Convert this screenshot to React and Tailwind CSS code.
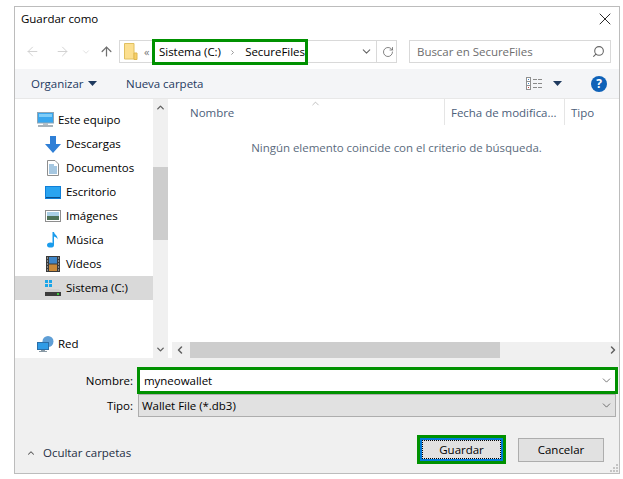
import { ArrowLeft, ArrowRight, ArrowUp, ChevronDown, ChevronUp, ChevronLeft, ChevronRight, RotateCw, Search, X } from "lucide-react";

const Drive = () => (
  <svg width="16" height="16" viewBox="0 0 16 16">
    <rect x="0" y="0" width="3" height="3" fill="#1aa5e8" />
    <rect x="4" y="0" width="3" height="3" fill="#1aa5e8" />
    <rect x="0" y="4" width="3" height="3" fill="#1aa5e8" />
    <rect x="4" y="4" width="3" height="3" fill="#1aa5e8" />
    <path d="M2 9h12l2 3H0z" fill="#d0d0d0" />
    <rect x="0" y="12" width="16" height="4" fill="#3d3d3d" />
    <rect x="12" y="13" width="2" height="2" fill="#3ec83e" />
  </svg>
);

const Monitor = () => (
  <svg width="17" height="16" viewBox="0 0 17 16">
    <rect x="0.500" y="0.500" width="16" height="10.500" fill="#38a6ee" stroke="#8fa6b5" />
    <rect x="2" y="2" width="13" height="3" fill="#7fcdf8" />
    <rect x="6" y="11" width="5" height="2" fill="#b5c0c8" />
    <rect x="1" y="13" width="15" height="2" fill="#a8b3bb" />
  </svg>
);

const Downloads = () => (
  <svg width="16" height="17" viewBox="0 0 16 17">
    <path d="M5 0h6v8h5l-8 9-8-9h5z" fill="#2f7fd6" />
  </svg>
);

const Documents = () => (
  <svg width="12" height="16" viewBox="0 0 12 16">
    <path d="M.5 .5h7.500l3.500 3.500v11.500h-11z" fill="#fff" stroke="#8e8e8e" />
    <path d="M2 5h5M2 7h8M2 9h8M2 11h8M2 13h8" stroke="#4d8fc2" />
  </svg>
);

const Desktop = () => (
  <svg width="16" height="13" viewBox="0 0 16 13">
    <rect x="0" y="0" width="16" height="13" fill="#0f7fd8" />
    <rect x="1" y="1" width="14" height="10" fill="#2aa4f0" />
    <rect x="1" y="11" width="14" height="1" fill="#0b4f8c" />
  </svg>
);

const Pictures = () => (
  <svg width="16" height="12" viewBox="0 0 16 12">
    <rect x="0.500" y="0.500" width="15" height="11" fill="#fff" stroke="#8e8e8e" />
    <rect x="2" y="2" width="12" height="4" fill="#a9cfe6" />
    <rect x="2" y="6" width="12" height="4" fill="#4d7257" />
  </svg>
);

const Music = () => (
  <svg width="11" height="16" viewBox="0 0 11 16">
    <ellipse cx="3.500" cy="13" rx="3.500" ry="2.600" fill="#1b9cec" />
    <path d="M5.500 13V0h1.500c.4 2.500 4 3.500 3.500 7.500C10 5.500 8.500 5 7 4.500V13z" fill="#1b9cec" />
  </svg>
);

const Videos = () => (
  <svg width="14" height="16" viewBox="0 0 14 16">
    <rect x="0" y="0" width="14" height="16" fill="#3a3a3a" />
    <rect x="3" y="1" width="8" height="6.500" fill="#3f87c9" />
    <rect x="3" y="8.500" width="8" height="6.500" fill="#c98a3a" />
    <path d="M1 2h1M1 5h1M1 8h1M1 11h1M1 14h1M12 2h1M12 5h1M12 8h1M12 11h1M12 14h1" stroke="#ddd" />
  </svg>
);

const Network = () => (
  <svg width="17" height="16" viewBox="0 0 17 16">
    <circle cx="11" cy="5.500" r="5.500" fill="#5f9fd6" />
    <rect x="0.500" y="6.500" width="11" height="7" fill="#2f9be6" stroke="#2a6ea8" />
    <rect x="4" y="14" width="4" height="1" fill="#8a9aa5" />
    <rect x="2" y="15" width="8" height="1" fill="#8a9aa5" />
  </svg>
);

const Folder = () => (
  <svg width="14" height="17" viewBox="0 0 14 17">
    <path d="M.5 .5h9.500v15.500H.5z" fill="#fcdf8f" stroke="#e0c060" />
    <path d="M10 10h3v6.500h-3z" fill="#f6cf6a" stroke="#e0b84f" />
  </svg>
);

const ViewsIcon = () => (
  <svg width="17" height="13" viewBox="0 0 17 13">
    <rect x="0.500" y="0.500" width="4" height="12" fill="#fff" stroke="#8f8f8f" />
    <path d="M1 4.500h3M1 8.500h3" stroke="#8f8f8f" />
    <rect x="2" y="2" width="1" height="1" fill="#3f87c9" />
    <rect x="2" y="6" width="1" height="1" fill="#3f87c9" />
    <rect x="2" y="10" width="1" height="1" fill="#c94040" />
    <path d="M7 2.500h4M12 2.500h4M7 6.500h4M12 6.500h4M7 10.500h4M12 10.500h4" stroke="#8a8a8a" />
  </svg>
);

const Grip = () => (
  <svg width="8" height="8" viewBox="0 0 8 8" className="absolute right-[1px] bottom-[1px]">
    <path d="M6 0h2v2H6zM3 3h2v2H3zM6 3h2v2H6zM0 6h2v2H0zM3 6h2v2H3zM6 6h2v2H6z" fill="#c4c4c4" />
  </svg>
);

const Caret = ({ className }) => (
  <svg width="9" height="5" viewBox="0 0 9 5" className={className}>
    <path d="M0 0h9L4.500 5z" fill="currentColor" />
  </svg>
);

const treeItems = [
  { label: "Descargas", icon: <Downloads />, pad: "" },
  { label: "Documentos", icon: <Documents />, pad: "pl-[2px]" },
  { label: "Escritorio", icon: <Desktop />, pad: "" },
  { label: "Imágenes", icon: <Pictures />, pad: "" },
  { label: "Música", icon: <Music />, pad: "pl-[2px]" },
  { label: "Vídeos", icon: <Videos />, pad: "pl-[1px]" },
];

const TreeRow = ({ label, icon, selected, top, pad }) => (
  <div
    className={`h-6 flex items-center ${top ? "pl-[22px]" : "pl-[30px]"} ${
      selected ? "bg-[#d9d9d9]" : ""
    }`}
  >
    <span className={`w-[21px] flex shrink-0 ${pad || ""}`}>{icon}</span>
    <span className="text-black">{label}</span>
  </div>
);

export default function App() {
  return (
    <div className="w-[623px] h-[479px] bg-white pl-[14px] pt-[6px] text-[11.5px] leading-none font-['Open_Sans','Noto_Sans',sans-serif] tracking-[-0.03px] whitespace-nowrap">
      <div className="w-[606px] h-[468px] border border-[#bcbcbc] flex flex-col bg-white">
        {/* TITLE */}
        <div className="h-[27px] shrink-0 flex items-center justify-between pl-[6px] pr-[4px] pb-[4px]">
          <span className="text-black">Guardar como</span>
          <X size={20} strokeWidth={1} className="text-black" />
        </div>

        {/* NAV */}
        <div className="h-[35px] shrink-0 flex items-center pl-[10px] text-[#444]">
          <ArrowLeft size={15} strokeWidth={1.5} className="text-[#cfcfcf]" />
          <ArrowRight size={15} strokeWidth={1.5} className="text-[#cfcfcf] ml-[15px]" />
          <ChevronDown size={10} strokeWidth={1.5} className="text-[#cfcfcf] ml-[11px]" />
          <ArrowUp size={15} strokeWidth={2} className="text-[#707070] ml-[8px]" />
          <div className="ml-[5px] w-[278px] h-[23px] border border-[#d9d9d9] flex items-center pl-[4px]">
            <Folder />
            <span className="ml-[6px] text-[#777] text-[11px] w-[8px]">«</span>
            <div className="w-[156px] h-[26px] shrink-0 border-[3px] border-[#009100] flex items-center pl-[4px] bg-white text-black pt-[1px]">
              <span className="w-[62px]">Sistema (C:)</span>
              <ChevronRight size={9} strokeWidth={2.5} className="text-[#777] ml-[8px]" />
              <span className="ml-[9px]">SecureFiles</span>
            </div>
            <ChevronDown size={13} strokeWidth={2} className="text-[#666] ml-[52px]" />
            <div className="ml-[3px] w-px h-[21px] bg-[#d9d9d9]" />
            <RotateCw size={12} strokeWidth={1.6} className="text-[#666] ml-[5px]" />
          </div>
          <div className="ml-[12px] w-[202px] h-[23px] border border-[#d9d9d9] flex items-center justify-between pl-[7px] pr-[5px]">
            <span className="text-[#6d6d6d]">Buscar en SecureFiles</span>
            <Search size={13} strokeWidth={2} className="text-[#666] -scale-x-100" />
          </div>
        </div>

        {/* COMMAND BAR */}
        <div className="h-[30px] shrink-0 bg-[#f4f5f7] border-b border-[#e8e8e8] flex items-center pl-[16px] pr-[12px] text-[#1f3a5f]">
          <span className="w-[52px]">Organizar</span>
          <Caret className="ml-[5px] text-[#1f3a5f]" />
          <span className="ml-[29px]">Nueva carpeta</span>
          <span className="ml-auto">
            <ViewsIcon />
          </span>
          <Caret className="ml-[10px] text-[#1f3a5f]" />
          <div className="ml-[29px] w-4 h-4 rounded-full bg-[#0f62b8] text-white flex items-center justify-center font-bold text-[12px]">
            ?
          </div>
        </div>

        {/* MAIN */}
        <div className="flex-1 flex min-h-0">
          <div className="w-[138px] shrink-0 pt-[9px]">
            <TreeRow label="Este equipo" icon={<Monitor />} top />
            {treeItems.map((item) => (
              <TreeRow key={item.label} label={item.label} icon={item.icon} pad={item.pad} />
            ))}
            <TreeRow label="Sistema (C:)" icon={<Drive />} selected />
            <div className="h-8" />
            <TreeRow label="Red" icon={<Network />} top />
          </div>

          {/* tree scrollbar */}
          <div className="w-[15px] shrink-0 bg-[#f0f0f0] flex flex-col items-center">
            <ChevronUp size={11} strokeWidth={3} className="text-[#606060] mt-[3px]" />
            <div className="w-full h-[73px] bg-[#cdcdcd] mt-[54px]" />
            <ChevronDown size={11} strokeWidth={3} className="text-[#606060] mt-auto mb-[3px]" />
          </div>

          {/* file list */}
          <div className="flex-1 ml-[2px] flex flex-col min-w-0">
            <div className="h-[26px] shrink-0 flex text-[#4c607a] relative">
              <div className="w-[275px] h-full flex items-center pl-[20px] pt-[2px] border-r border-[#e5e5e5]">Nombre</div>
              <div className="w-[120px] h-full flex items-center pl-[6px] pt-[2px] border-r border-[#e5e5e5] overflow-hidden">
                Fecha de modifica...
              </div>
              <div className="flex items-center pl-[6px] pt-[2px]">Tipo</div>
              <ChevronUp size={11} strokeWidth={1} className="absolute left-[140px] -top-[1px] text-[#777]" />
            </div>
            <div className="flex-1 pt-[17px] pl-[4px] text-center text-[#5b6b7d]">
              Ningún elemento coincide con el criterio de búsqueda.
            </div>
            <div className="h-[16px] shrink-0 ml-[2px] bg-[#f0f0f0] flex items-center">
              <ChevronLeft size={12} strokeWidth={3} className="text-[#606060] ml-[2px]" />
              <div className="ml-[4px] w-[310px] h-full bg-[#cdcdcd]" />
              <ChevronRight size={12} strokeWidth={3} className="text-[#606060] ml-auto" />
            </div>
          </div>
        </div>

        {/* FOOTER */}
        <div className="h-[115px] shrink-0 bg-[#f0f0f0] flex flex-col relative">
          <div className="flex items-center mt-[9px] h-[27px]">
            <span className="w-[118px] text-right text-black">Nombre:</span>
            <div className="ml-[4px] w-[481px] h-[27px] border-[3px] border-[#009100] bg-white flex items-center justify-between pl-[4px] pr-[2px] text-black">
              <span>myneowallet</span>
              <ChevronDown size={13} strokeWidth={1.2} className="text-[#333]" />
            </div>
          </div>
          <div className="flex items-center h-[23px]">
            <span className="w-[118px] text-right text-black">Tipo:</span>
            <div className="ml-[5px] w-[478px] h-[23px] border border-[#adadad] bg-[#e1e1e1] flex items-center justify-between pl-[3px] pr-[2px] text-black">
              <span>Wallet File (*.db3)</span>
              <ChevronDown size={13} strokeWidth={1.2} className="text-[#333]" />
            </div>
          </div>
          <div className="flex items-center mt-[18px] pl-[11px]">
            <div className="w-[17px] flex items-center translate-y-[3px]">
              <ChevronUp size={10} strokeWidth={2.5} className="text-[#555]" />
            </div>
            <span className="text-[#1f2f44] w-[86px] translate-y-[3px]">Ocultar carpetas</span>
            <div className="ml-[288px] w-[89px] h-[29px] border-[3px] border-[#009100] flex">
              <div className="flex-1 border-2 border-[#0078d7] bg-[#e1e1e1] flex items-center justify-center text-black outline-1 -outline-offset-3 outline-dotted outline-black">
                Guardar
              </div>
            </div>
            <div className="ml-[12px] w-[86px] h-[24px] border border-[#adadad] bg-[#e1e1e1] flex items-center justify-center text-black">
              Cancelar
            </div>
          </div>
          <Grip />
        </div>
      </div>
    </div>
  );
}
